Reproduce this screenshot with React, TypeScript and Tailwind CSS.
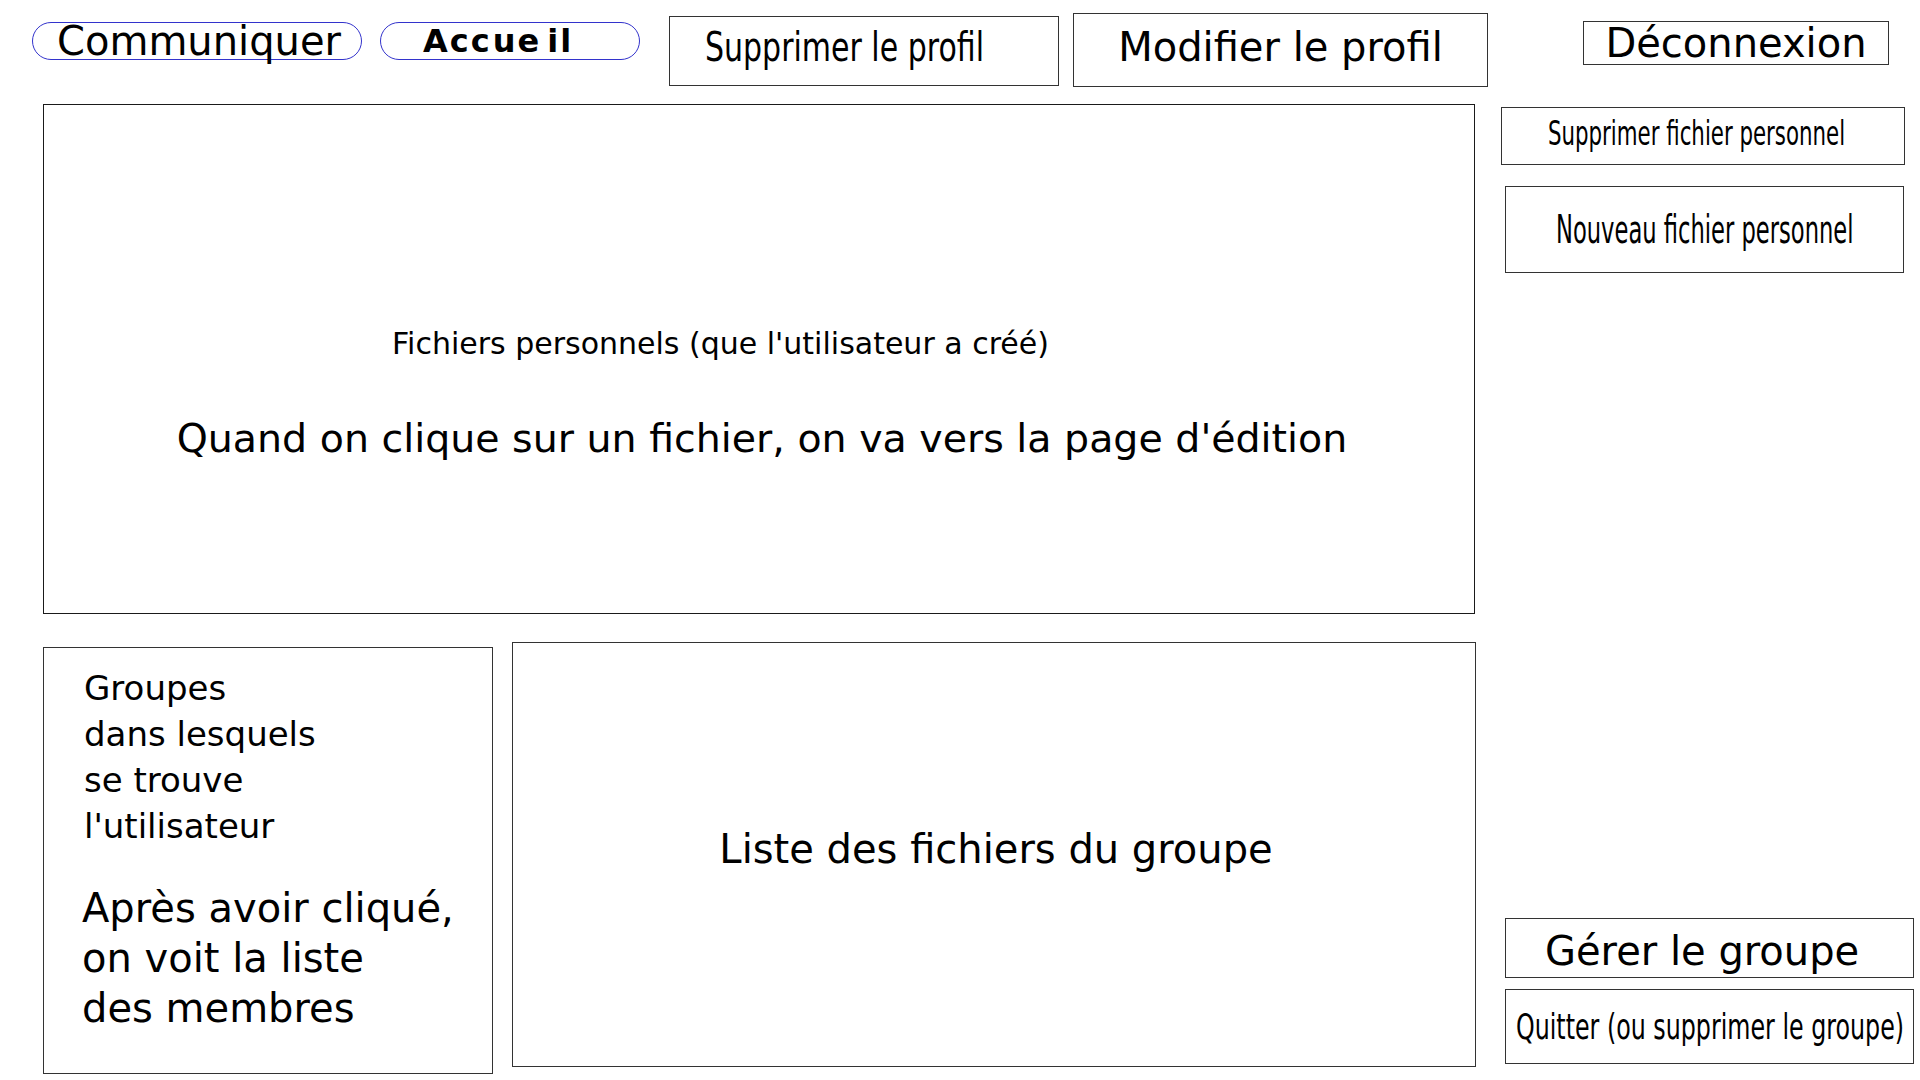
import React from "react";

const Pill = ({ children, className }: { children: React.ReactNode; className: string }) => (
  <div className={`flex items-center h-[38px] rounded-full border border-[#3333cc] ${className}`}>
    {children}
  </div>
);

// boite rectangulaire avec texte ecrase horizontalement
const Box = ({
  label,
  className,
  textClass,
}: {
  label: string;
  className: string;
  textClass: string;
}) => (
  <div className={`flex items-center border border-[#333] ${className}`}>
    <span className={`inline-block whitespace-nowrap origin-left leading-none ${textClass}`}>{label}</span>
  </div>
);

export default function App() {
  return (
    <div className="w-[1920px] h-[1080px] bg-white text-black font-['DejaVu_Sans',sans-serif] overflow-hidden">
      {/* barre du haut */}
      <div className="flex items-start h-[104px]">
        <Pill className="ml-[32px] mt-[22px] w-[330px] justify-center pl-[4px]">
          <span className="whitespace-nowrap leading-[38px] text-[40px]">Communiquer</span>
        </Pill>
        <Pill className="ml-[18px] mt-[22px] w-[260px] pl-[42px]">
          <span className="whitespace-nowrap leading-[38px] text-[32px] font-bold tracking-[2px]">
            Acc<span className="ml-[1px]">ue</span><span className="ml-[6px]">il</span>
          </span>
        </Pill>
        <Box
          label="Supprimer le profil"
          className="ml-[29px] mt-[16px] w-[390px] h-[70px] pl-[35px] pb-[8px]"
          textClass="text-[40px] scale-x-[0.75]"
        />
        <Box
          label="Modifier le profil"
          className="ml-[14px] mt-[13px] w-[415px] h-[74px] justify-center pb-[6px]"
          textClass="text-[40px]"
        />
        <Box
          label="Déconnexion"
          className="ml-[95px] mt-[21px] w-[306px] h-[44px] justify-center"
          textClass="text-[40px]"
        />
      </div>

      <div className="flex items-start">
        {/* colonne gauche */}
        <div className="w-[1476px] flex flex-col">
          <div className="ml-[43px] w-[1432px] h-[510px] border-[1.5px] border-[#1a1a1a] flex flex-col">
            <p className="ml-[348px] mt-[221px] text-[30px] leading-[36px] whitespace-nowrap">
              Fichiers personnels (que l'utilisateur a créé)
            </p>
            <p className="mt-[52px] pl-[6px] text-center text-[39.5px] leading-[48px] whitespace-nowrap">
              Quand on clique sur un fichier, on va vers la page d'édition
            </p>
          </div>

          <div className="flex items-start">
            <div className="ml-[43px] mt-[33px] w-[450px] h-[427px] border border-[#333] pl-[40px] pt-[17px]">
              <div className="text-[34px] leading-[46px]">
                <p>Groupes</p>
                <p>dans lesquels</p>
                <p>se trouve</p>
                <p>l'utilisateur</p>
              </div>
              <div className="mt-[34px] -ml-[2px] text-[40px] leading-[50px]">
                <p>Après avoir cliqué,</p>
                <p>on voit la liste</p>
                <p>des membres</p>
              </div>
            </div>
            <div className="ml-[19px] mt-[28px] w-[964px] h-[425px] border border-[#333] flex items-center justify-center pb-[12px] pl-[4px]">
              <p className="text-[40px] leading-[48px]">Liste des fichiers du groupe</p>
            </div>
          </div>
        </div>

        {/* colonne droite */}
        <div className="ml-[25px] flex flex-col">
          <Box
            label="Supprimer fichier personnel"
            className="mt-[3px] w-[404px] h-[58px] pl-[46px] pb-[6px]"
            textClass="text-[33px] scale-x-[0.646]"
          />
          <Box
            label="Nouveau fichier personnel"
            className="ml-[4px] mt-[21px] w-[399px] h-[87px] pl-[50px]"
            textClass="text-[39px] scale-x-[0.58]"
          />
          <Box
            label="Gérer le groupe"
            className="ml-[4px] mt-[645px] w-[409px] h-[60px] pl-[39px] pt-[6px]"
            textClass="text-[40px]"
          />
          <Box
            label="Quitter (ou supprimer le groupe)"
            className="ml-[4px] mt-[11px] w-[409px] h-[75px] pl-[10px]"
            textClass="text-[36px] scale-x-[0.66]"
          />
        </div>
      </div>
    </div>
  );
}
